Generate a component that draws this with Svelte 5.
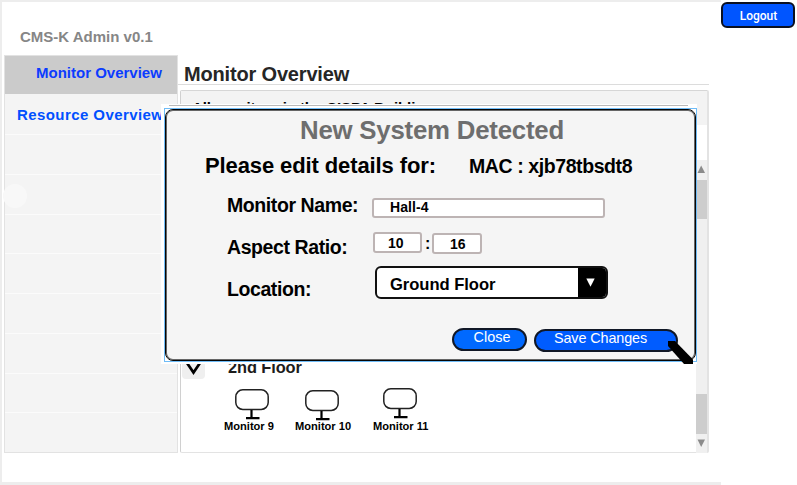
<script>
  const emptyRows = [1, 2, 3, 4, 5, 6, 7, 8];
  const monitors = [
    { name: 'Monitor 9', width: 50, gap: 0, iconX: 11, drop: 1 },
    { name: 'Monitor 10', width: 56, gap: 21, iconX: 10, drop: 2 },
    { name: 'Monitor 11', width: 55, gap: 22, iconX: 10, drop: 0 }
  ];
</script>

<div class="page">
  <div class="frame">
    <div class="brand">CMS-K Admin v0.1</div>
    <div class="columns">
      <nav>
        <div class="item active"><span>Monitor Overview</span></div>
        <div class="item second"><span>Resource Overview</span></div>
        {#each emptyRows as row (row)}
          <div class="item"></div>
        {/each}
        <i class="dot"></i>
      </nav>
      <main>
        <h1>Monitor Overview</h1>
        <section class="panel">
          <div class="panel-head">All monitors in the CISPA Building</div>
          <div class="panel-body">
            <div class="list">
              <div class="floor">
                <div class="toggle">
                  <svg width="23" height="23" viewBox="0 0 23 23"><path d="M3 3L11.5 15.5L20 3" fill="none" stroke="#000" stroke-width="2.7" /></svg>
                </div>
                <span>2nd Floor</span>
              </div>
              <div class="monitors">
                {#each monitors as m (m.name)}
                  <div class="monitor" style="width:{m.width}px;margin-left:{m.gap}px">
                    <svg style="margin-left:{m.iconX}px;margin-top:{m.drop}px;margin-bottom:{3 - m.drop}px" width="34" height="31" viewBox="0 0 34 31">
                      <rect x="0.8" y="0.8" width="32.4" height="19.6" rx="7" fill="#fff" stroke="#222" stroke-width="1.5" />
                      <path d="M16.5 21V29M11 29.2H24.5" fill="none" stroke="#000" stroke-width="2.2" />
                    </svg>
                    <span>{m.name}</span>
                  </div>
                {/each}
              </div>
            </div>
            <div class="scroll">
              <svg width="11" height="20"><path d="M1.5 13L5.2 5.5L9 13Z" fill="#8b8b8b" /></svg>
              <div class="thumb"></div>
              <div class="track"></div>
              <div class="thumb low"></div>
              <svg width="11" height="19"><path d="M1.5 5.5L5.2 13L9 5.5Z" fill="#8b8b8b" /></svg>
            </div>
          </div>
        </section>
      </main>
    </div>
  </div>
  <button class="logout">Logout</button>

  <div class="overlay">
    <div class="rule"></div>
    <div class="outline">
      <div class="dialog">
        <h2>New System Detected</h2>
        <div class="sub">
          <span class="please">Please edit details for:</span>
          <span class="mac">MAC : xjb78tbsdt8</span>
        </div>
        <div class="row name">
          <label for="name">Monitor Name:</label>
          <div class="field wide" id="name">Hall-4</div>
        </div>
        <div class="row ratio">
          <span class="label">Aspect Ratio:</span>
          <div class="field small">10</div>
          <span class="colon">:</span>
          <div class="field small right">16</div>
        </div>
        <div class="row location">
          <span class="label">Location:</span>
          <div class="select">
            <span>Ground Floor</span>
            <div class="arrow"><svg width="9" height="9"><path d="M0.3 0.5H8.7L4.5 8.7Z" fill="#fff" /></svg></div>
          </div>
        </div>
        <div class="actions">
          <button class="close">Close</button>
          <button class="save">Save Changes</button>
        </div>
      </div>
    </div>
    <svg class="pointer" width="26" height="23"><path d="M0 0H7L25 18.5V23H16L0 5Z" fill="#000" /></svg>
  </div>
</div>

<style>
  :global(body) { margin: 0; background: #fff; overflow: hidden; }
  * { box-sizing: border-box; }
  .page {
    position: relative; display: flex; align-items: flex-start; width: 797px; height: 485px; background: #fff;
    font-family: "Liberation Sans", Arial, sans-serif; font-weight: bold; line-height: 20px; color: #000; white-space: nowrap;
  }
  svg { display: block; flex: none; }
  button { font: inherit; padding: 0; margin: 0; display: block; color: #fff; flex: none; }
  .frame { width: 721px; height: 485px; border: 2px solid #ededed; border-right: 0; border-bottom-width: 3px; flex: none; }
  .brand { height: 53px; padding: 25px 0 0 18px; font-size: 15px; color: #868686; }
  .columns { display: flex; height: 398px; padding-left: 2px; }
  nav { position: relative; width: 174px; height: 398px; background: #f4f4f4; border: 1px solid #e2e2e2; flex: none; }
  .item { height: 39.75px; border-bottom: 1px solid #fbfbfb; font-size: 15px; color: #0050ff; }
  .item.active { height: 38px; background: #cbcbcb; border: 0; color: #0b3cff; padding: 7px 0 0 31px; }
  .item.second { height: 41px; padding: 11px 0 0 12px; letter-spacing: 0.42px; }
  .item:nth-last-child(2) { border: 0; }
  .dot { position: absolute; left: -2px; top: 128px; width: 24px; height: 24px; border-radius: 50%; background: #f8f8f8; }
  main { width: 531px; flex: none; }
  h1 { margin: 0; height: 30px; padding: 9px 0 0 6px; border-bottom: 1px solid #dcdcdc; font-size: 20px; line-height: 20px; letter-spacing: -0.17px; color: #262626; }
  .panel { margin: 5px 0 0 2px; width: 529px; height: 363px; border: 2px solid #e3e3e3; border-width: 1px 2px 1px 1px; border-top-color: #d6d6d6; border-left-color: #d0d0d0; border-radius: 2px; }
  .panel-head { height: 34px; padding: 7px 0 0 11px; background: #f3f3f3; font-size: 15px; letter-spacing: -0.08px; }
  .panel-body { display: flex; justify-content: space-between; height: 327px; }
  .list { padding-top: 232px; }
  .floor { display: flex; height: 22px; }
  .toggle { width: 23px; height: 22px; margin-left: 1px; background: #efefef; border-radius: 4px; }
  .floor span { margin-left: 23px; font-size: 16.4px; letter-spacing: -0.1px; color: #1c1c1c; }
  .monitors { display: flex; padding: 9px 0 0 43px; font-size: 11.1px; }
  .monitor span { display: block; line-height: 14px; margin-top: -3px; }
  .scroll { width: 11px; height: 293px; margin-top: 35px; background: #f0f0f0; display: flex; flex-direction: column; flex: none; }
  .thumb { height: 39px; background: #cdcdcd; margin-left: 1px; }
  .thumb.low { margin-left: 0; height: 40px; }
  .track { flex: 1; }
  .logout { width: 74px; height: 26px; margin-top: 2px; border: 2px solid #0b1020; border-radius: 6px; background: #0055ff; font-size: 12px; line-height: 20px; padding: 1px 0 0 1px; font-family: Roboto, "Liberation Sans", sans-serif; font-weight: 500; }

  .overlay { position: absolute; left: 161px; top: 104px; width: 536px; height: 260px; background: #fff; }
  .rule { height: 1px; margin: 1px 9px 2px 8px; background: #b9b9b9; }
  .outline { margin-left: 3px; width: 533px; height: 254px; border: 1px solid #6fbcf7; }
  .dialog { width: 531px; height: 252px; background: #f5f5f5; border: 1px solid #050505; box-shadow: inset 0 0 0 1px #666; border-radius: 8px; }
  h2 { margin: 0; height: 45px; padding: 10px 0 0 134px; font-size: 25.8px; line-height: 20px; letter-spacing: -0.22px; color: #6e6e6e; }
  .sub { display: flex; height: 33px; }
  .please { width: 263px; padding-left: 39px; font-size: 22px; line-height: 22px; letter-spacing: -0.11px; }
  .mac { margin-left: 40px; font-size: 19.5px; line-height: 22px; letter-spacing: -0.41px; }
  .row { display: flex; align-items: flex-start; padding-left: 61px; font-size: 19.5px; letter-spacing: -0.41px; }
  label, .label { width: 145px; margin-top: -1px; flex: none; }
  .name { height: 42px; padding-top: 8px; }
  .ratio { height: 42px; padding-top: 8px; }
  .location { height: 56px; padding-top: 8px; }
  .field { height: 20px; border: 2px solid #bdb4b4; border-radius: 3px; background: #fff; font-size: 14px; line-height: 15px; letter-spacing: 0; flex: none; }
  .wide { width: 233px; margin-top: 2px; padding-left: 16px; letter-spacing: 0.1px; }
  .small { width: 49px; height: 21px; margin-top: -6px; padding-left: 13px; line-height: 18px; margin-left: 1px; }
  .colon { width: 10px; padding-left: 3px; margin-top: -4px; font-size: 16px; }
  .small.right { width: 50px; height: 21px; margin-left: 0; margin-top: -5px; padding-left: 16px; }
  .select { width: 233px; height: 33px; margin: -14px 0 0 3px; display: flex; border: 2px solid #111; border-radius: 6px; background: #fff; overflow: hidden; font-size: 16.6px; letter-spacing: -0.05px; }
  .select span { flex: 1; padding: 7px 0 0 13px; }
  .arrow { width: 28px; background: #000; padding: 10px 0 0 8px; }
  .actions { display: flex; padding-left: 286px; font-weight: normal; font-size: 14.4px; }
  .actions button { border: 2px solid #111827; border-radius: 12px; height: 23px; }
  .close { width: 75px; background: #0069ff; line-height: 14px; padding: 0 0 5px 5px; }
  .save { width: 144px; margin: 1px 0 0 7px; background: #005cff; line-height: 14px; padding: 0 11px 5px 0; letter-spacing: -0.1px; }
  .pointer { position: absolute; left: 507px; top: 237px; }
</style>
